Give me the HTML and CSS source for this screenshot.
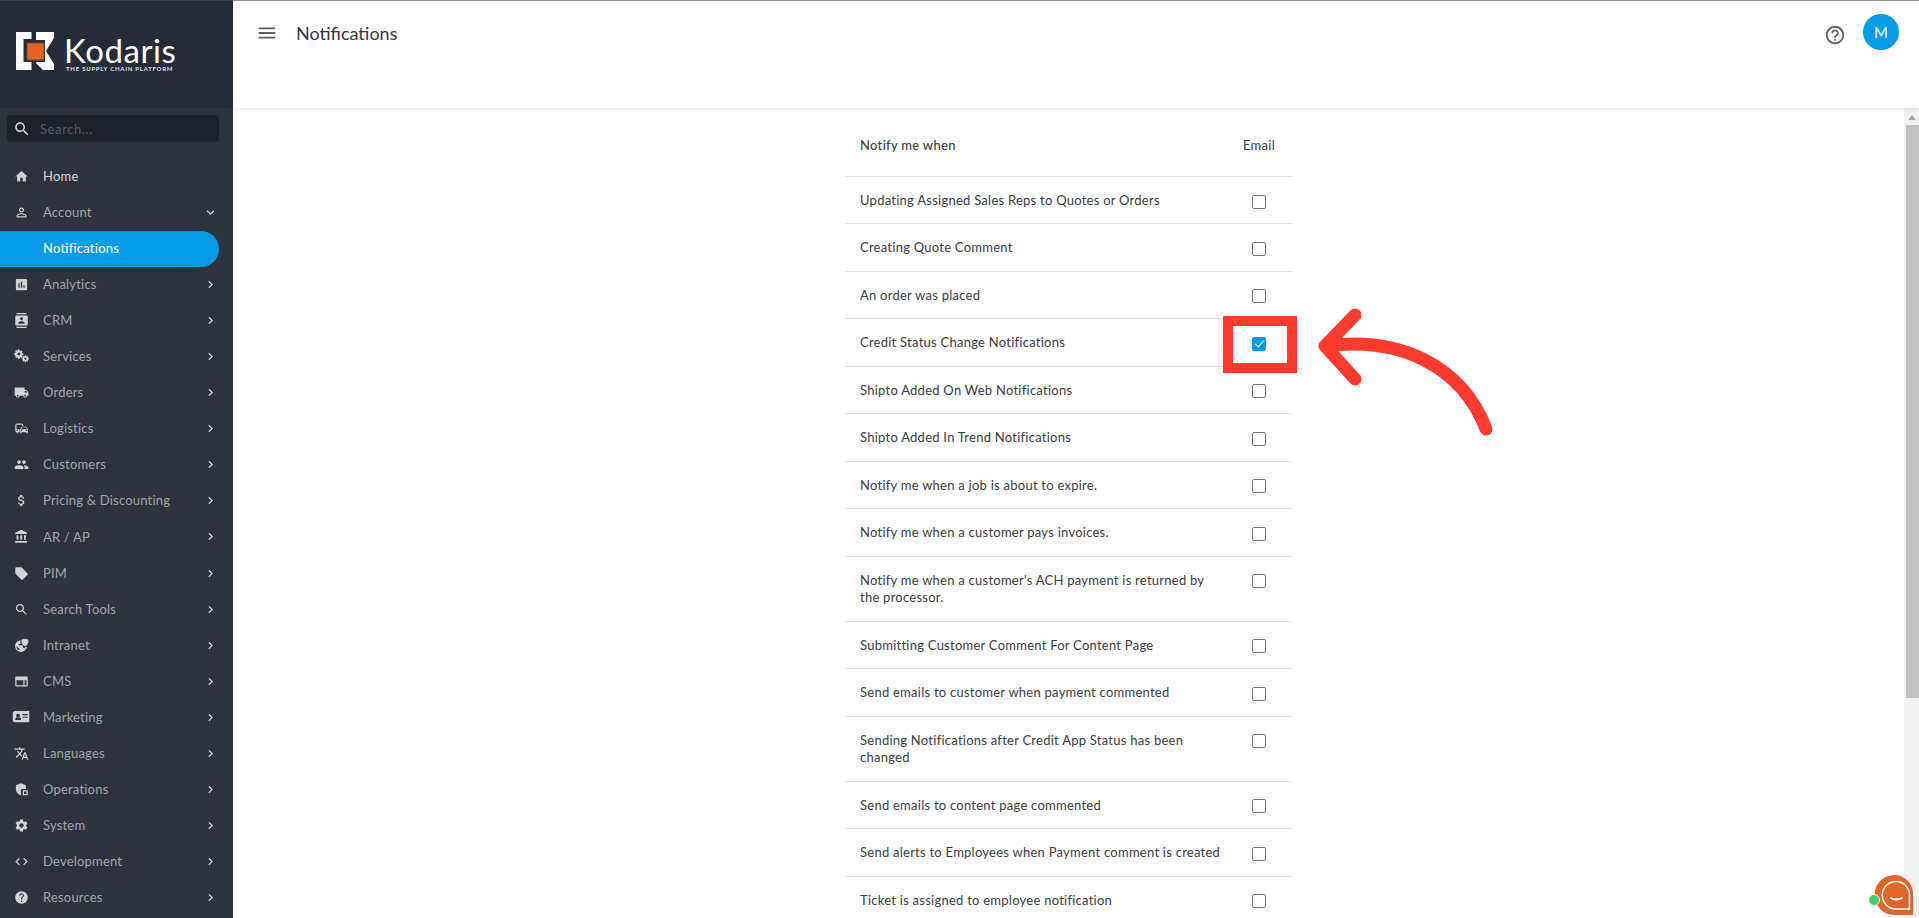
FILE: index.html
```html
<!DOCTYPE html>
<html lang="en">
<head>
<meta charset="utf-8">
<title>Notifications</title>
<link rel="stylesheet" href="styles.css">
</head>
<body>
<svg class="sprite" width="0" height="0" aria-hidden="true">
  <symbol id="i-right" viewBox="0 0 24 24"><path d="M10 6L8.59 7.41 13.17 12l-4.58 4.59L10 18l6-6z"/></symbol>
  <symbol id="i-down" viewBox="0 0 24 24"><path d="M16.59 8.59L12 13.17 7.41 8.59 6 10l6 6 6-6z"/></symbol>
  <symbol id="i-search" viewBox="0 0 24 24"><path d="M15.5 14h-.79l-.28-.27C15.41 12.59 16 11.11 16 9.5 16 5.91 13.09 3 9.5 3S3 5.91 3 9.5 5.91 16 9.5 16c1.61 0 3.09-.59 4.23-1.57l.27.28v.79l5 4.99L20.49 19l-4.99-5zm-6 0C7.01 14 5 11.99 5 9.5S7.01 5 9.5 5 14 7.01 14 9.5 11.99 14 9.5 14z"/></symbol>
</svg>
<div class="app">
  <aside class="sidebar">
    <div class="brand">
      <svg class="mark" viewBox="0 0 38 38" width="38" height="38">
        <path fill="#fff" d="M0 0H15.500V7H7.500V30H15.500V38H0z"/>
        <path fill="#fff" d="M20 0H38V6L30 19L38 32V38H27L20 31V30H29V8H20z"/>
        <rect x="11" y="11" width="17" height="17" fill="#df6426" stroke="#7a4a32" stroke-width="1"/>
      </svg>
      <div class="wordmark">
        <span class="word">Kodaris</span>
        <span class="tagline">THE SUPPLY CHAIN PLATFORM</span>
      </div>
    </div>
    <div class="side-body">
      <label class="search">
        <svg class="search-icon"><use href="#i-search"/></svg>
        <span class="search-text">Search...</span>
      </label>
      <nav class="nav">
        <a class="item home"><svg class="ico" viewBox="0 0 24 24"><path d="M10 20v-6h4v6h5v-8h3L12 3 2 12h3v8z"/></svg><span class="lbl">Home</span></a>
        <a class="item"><svg class="ico" viewBox="0 0 24 24"><path d="M12 5.9c1.16 0 2.1.94 2.1 2.1s-.94 2.1-2.1 2.1S9.9 9.16 9.9 8s.94-2.1 2.1-2.1m0 9c2.97 0 6.1 1.46 6.1 2.1v1.1H5.9V17c0-.64 3.13-2.1 6.1-2.1M12 4C9.79 4 8 5.79 8 8s1.79 4 4 4 4-1.79 4-4-1.79-4-4-4zm0 9c-2.67 0-8 1.34-8 4v3h16v-3c0-2.66-5.33-4-8-4z"/></svg><span class="lbl">Account</span><svg class="chev"><use href="#i-down"/></svg></a>
        <a class="item active"><span class="lbl">Notifications</span></a>
        <a class="item"><svg class="ico" viewBox="0 0 24 24"><path d="M19 3H5c-1.1 0-2 .9-2 2v14c0 1.1.9 2 2 2h14c1.1 0 2-.9 2-2V5c0-1.1-.9-2-2-2zM9 17H7v-7h2v7zm4 0h-2V7h2v10zm4 0h-2v-4h2v4z"/></svg><span class="lbl">Analytics</span><svg class="chev"><use href="#i-right"/></svg></a>
        <a class="item"><svg class="ico" viewBox="0 0 24 24"><path d="M20 0H4v2h16V0zM4 24h16v-2H4v2zM20 4H4c-1.1 0-2 .9-2 2v12c0 1.1.9 2 2 2h16c1.1 0 2-.9 2-2V6c0-1.1-.9-2-2-2zm-8 2.75c1.24 0 2.25 1.01 2.25 2.25s-1.01 2.25-2.25 2.25S9.75 10.24 9.75 9 10.76 6.75 12 6.75zM17 17H7v-1.5c0-1.67 3.33-2.5 5-2.5s5 .83 5 2.5V17z"/></svg><span class="lbl">CRM</span><svg class="chev"><use href="#i-right"/></svg></a>
        <a class="item"><svg class="ico" viewBox="0 0 24 24"><path fill-rule="evenodd" d="M7 1.500l1.300.2.5 2 1.600.7 1.800-1 1.700 1.700-1 1.800.7 1.600 2 .5v2.400l-2 .5-.7 1.600 1 1.800-1.700 1.700-1.800-1-1.600.7-.5 2H6l-.5-2-1.600-.7-1.800 1-1.700-1.700 1-1.800-.7-1.600-2-.5V8l2-.5.7-1.600-1-1.800 1.700-1.700 1.800 1 1.600-.7.5-2zM7.200 7a2.800 2.800 0 1 0 .01 0z" transform="translate(1.500 -.5) scale(.88)"/><path fill-rule="evenodd" d="M17 12.500h1.800l.3 1.500 1.100.5 1.300-.8 1.300 1.300-.8 1.300.5 1.100 1.500.3v1.800l-1.500.3-.5 1.100.8 1.300-1.300 1.300-1.300-.8-1.100.5-.3 1.500H17l-.3-1.500-1.100-.5-1.300.8-1.300-1.300.8-1.300-.5-1.100-1.500-.3v-1.800l1.500-.3.5-1.100-.8-1.300 1.300-1.300 1.300.8 1.100-.5zm.9 4.300a1.700 1.700 0 1 0 .01 0z" transform="translate(1.800 -1.500) scale(.92)"/></svg><span class="lbl">Services</span><svg class="chev"><use href="#i-right"/></svg></a>
        <a class="item"><svg class="ico" viewBox="0 0 24 24"><path d="M20 8h-3V4H3c-1.100 0-2 .9-2 2v11h2c0 1.660 1.340 3 3 3s3-1.340 3-3h6c0 1.660 1.340 3 3 3s3-1.340 3-3h2v-5l-3-4zM6 18.500c-.83 0-1.500-.67-1.500-1.500s.67-1.500 1.500-1.500 1.500.67 1.500 1.500-.67 1.500-1.500 1.500zm13.500-9l1.960 2.500H17V9.500h2.500zm-1.500 9c-.83 0-1.500-.67-1.500-1.500s.67-1.500 1.500-1.500 1.500.67 1.500 1.500-.67 1.500-1.500 1.500z"/></svg><span class="lbl">Orders</span><svg class="chev"><use href="#i-right"/></svg></a>
        <a class="item"><svg class="ico" viewBox="0 0 24 24"><path d="M12 4H5C3.340 4 2 5.340 2 7v8c0 1.660 1.340 3 3 3l-1 1v1h1l2-2.030L9 18v-5H4V5.980L13 6v2h2V7c0-1.660-1.340-3-3-3zM5 14c.55 0 1 .45 1 1s-.45 1-1 1-1-.45-1-1 .45-1 1-1zm15.570-4.340c-.14-.4-.52-.66-.97-.66h-7.190c-.46 0-.83.26-.98.66L10 13.770l.01 5.510c0 .38.31.72.69.72h.62c.38 0 .68-.38.68-.76V18h8v1.240c0 .38.31.76.69.76h.61c.38 0 .69-.34.69-.72l.01-1.370v-4.140l-1.430-4.110zm-8.160.34h7.190l1.030 3h-9.250l1.030-3zM12 16c-.55 0-1-.45-1-1s.45-1 1-1 1 .45 1 1-.45 1-1 1zm8 0c-.55 0-1-.45-1-1s.45-1 1-1 1 .45 1 1-.45 1-1 1z"/></svg><span class="lbl">Logistics</span><svg class="chev"><use href="#i-right"/></svg></a>
        <a class="item"><svg class="ico" viewBox="0 0 24 24"><path d="M16 11c1.660 0 2.990-1.340 2.990-3S17.660 5 16 5c-1.660 0-3 1.340-3 3s1.340 3 3 3zm-8 0c1.660 0 2.990-1.340 2.990-3S9.660 5 8 5C6.340 5 5 6.340 5 8s1.340 3 3 3zm0 2c-2.330 0-7 1.170-7 3.500V19h14v-2.500c0-2.330-4.670-3.500-7-3.500zm8 0c-.29 0-.62.02-.97.05 1.160.84 1.970 1.970 1.970 3.450V19h6v-2.500c0-2.330-4.670-3.500-7-3.500z"/></svg><span class="lbl">Customers</span><svg class="chev"><use href="#i-right"/></svg></a>
        <a class="item"><svg class="ico" viewBox="0 0 24 24"><path d="M11.800 10.900c-2.270-.59-3-1.200-3-2.150 0-1.090 1.010-1.850 2.700-1.850 1.780 0 2.440.85 2.500 2.100h2.210c-.07-1.720-1.120-3.300-3.210-3.810V3h-3v2.160c-1.940.42-3.500 1.680-3.500 3.610 0 2.310 1.910 3.460 4.700 4.130 2.500.6 3 1.480 3 2.410 0 .69-.49 1.790-2.700 1.790-2.060 0-2.870-.92-2.980-2.100h-2.200c.12 2.190 1.760 3.420 3.680 3.830V21h3v-2.150c1.950-.37 3.500-1.500 3.500-3.550 0-2.840-2.430-3.810-4.700-4.400z"/></svg><span class="lbl">Pricing &amp; Discounting</span><svg class="chev"><use href="#i-right"/></svg></a>
        <a class="item tall"><svg class="ico" viewBox="0 0 24 24"><path d="M4 10v7h3v-7H4zm6 0v7h3v-7h-3zM2 22h19v-3H2v3zm14-12v7h3v-7h-3zm-4.500-9L2 6v2h19V6l-9.500-5z"/></svg><span class="lbl">AR / AP</span><svg class="chev"><use href="#i-right"/></svg></a>
        <a class="item"><svg class="ico" viewBox="0 0 24 24"><path d="M21.410 11.580l-9-9C12.050 2.220 11.550 2 11 2H4c-1.100 0-2 .9-2 2v7c0 .55.22 1.050.59 1.420l9 9c.36.36.86.58 1.410.58.55 0 1.050-.22 1.410-.59l7-7c.37-.36.59-.86.59-1.410 0-.55-.23-1.060-.59-1.420z"/></svg><span class="lbl">PIM</span><svg class="chev"><use href="#i-right"/></svg></a>
        <a class="item"><svg class="ico"><use href="#i-search"/></svg><span class="lbl">Search Tools</span><svg class="chev"><use href="#i-right"/></svg></a>
        <a class="item"><svg class="ico" viewBox="0 0 24 24"><path fill-rule="evenodd" d="M10 3.500A9.500 9.500 0 1 0 20.500 14h-2.600a7 7 0 0 1-.9 2.600c-.3-.7-1-1.200-1.800-1.200h-1v-3c0-.5-.4-1-1-1H7.500V9.400h2c.5 0 1-.4 1-1V6.500h-.5zM9.700 20A7 7 0 0 1 4 13l4.700 4.700v.6c0 .9.500 1.500 1 1.700z"/><path d="M12 2.500l5.500-1.500L23 2.500v4c0 3-2.300 5.400-5.500 6.500-3.200-1.100-5.500-3.500-5.500-6.500z"/></svg><span class="lbl">Intranet</span><svg class="chev"><use href="#i-right"/></svg></a>
        <a class="item"><svg class="ico" viewBox="0 0 24 24"><path fill-rule="evenodd" d="M4 4h16c1.100 0 2 .9 2 2v12c0 1.100-.9 2-2 2H4c-1.100 0-2-.9-2-2V6c0-1.100.9-2 2-2zm0 6v8h11v-8H4zm13 0v8h3v-8h-3z"/></svg><span class="lbl">CMS</span><svg class="chev"><use href="#i-right"/></svg></a>
        <a class="item"><svg class="ico wide" viewBox="0 0 24 24"><path fill-rule="evenodd" d="M4 4h19v15H4c-1.700 0-3-1.300-3-3V7c0-1.700 1.300-3 3-3zm4 3.500a2.500 2.500 0 1 0 .01 0zM4.500 14v2H12v-2c0-1.200-2.400-2-3.800-2s-3.700.8-3.700 2zM14 8v1.500h7V8h-7zm0 3.500V13h7v-1.500h-7z"/></svg><span class="lbl">Marketing</span><svg class="chev"><use href="#i-right"/></svg></a>
        <a class="item"><svg class="ico" viewBox="0 0 24 24"><path d="M12.870 15.070l-2.540-2.510.03-.03c1.740-1.940 2.980-4.170 3.710-6.530H17V4h-7V2H8v2H1v1.990h11.170C11.500 7.920 10.440 9.750 9 11.350 8.070 10.320 7.300 9.190 6.690 8h-2c.73 1.630 1.730 3.170 2.980 4.560l-5.090 5.020L4 19l5-5 3.110 3.110.76-2.040zM18.500 10h-2L12 22h2l1.120-3h4.750L21 22h2l-4.500-12zm-2.620 7l1.620-4.330L19.120 17h-3.240z"/></svg><span class="lbl">Languages</span><svg class="chev"><use href="#i-right"/></svg></a>
        <a class="item"><svg class="ico" viewBox="0 0 24 24"><path fill-rule="evenodd" d="M11 2l8 3v6h-6a2 2 0 0 0-2 2v8.500C6.500 20 3 16 3 11V5zM14 13h8v8h-8zm2 2v4h4v-4z"/></svg><span class="lbl">Operations</span><svg class="chev"><use href="#i-right"/></svg></a>
        <a class="item"><svg class="ico" viewBox="0 0 24 24"><path d="M19.140 12.940c.04-.3.06-.61.06-.94 0-.32-.02-.64-.07-.94l2.030-1.580c.18-.14.23-.41.12-.61l-1.920-3.320c-.12-.22-.37-.29-.59-.22l-2.390.96c-.5-.38-1.030-.7-1.620-.94l-.36-2.540c-.04-.24-.24-.41-.48-.41h-3.840c-.24 0-.43.17-.47.41l-.36 2.540c-.59.24-1.130.57-1.620.94l-2.390-.96c-.22-.08-.47 0-.59.22L2.740 8.870c-.12.21-.08.47.12.61l2.030 1.580c-.05.3-.09.63-.09.94s.02.64.07.94l-2.030 1.580c-.18.14-.23.41-.12.61l1.920 3.320c.12.22.37.29.59.22l2.390-.96c.5.38 1.030.7 1.620.94l.36 2.540c.05.24.24.41.48.41h3.840c.24 0 .44-.17.47-.41l.36-2.540c.59-.24 1.130-.56 1.620-.94l2.390.96c.22.08.47 0 .59-.22l1.920-3.320c.12-.22.07-.47-.12-.61l-2.010-1.580zM12 15.600c-1.980 0-3.600-1.620-3.600-3.600s1.620-3.600 3.600-3.600 3.600 1.620 3.600 3.600-1.620 3.600-3.600 3.600z"/></svg><span class="lbl">System</span><svg class="chev"><use href="#i-right"/></svg></a>
        <a class="item"><svg class="ico" viewBox="0 0 24 24"><path d="M9.400 16.600L4.800 12l4.600-4.600L8 6l-6 6 6 6 1.400-1.400zm5.200 0l4.600-4.600-4.600-4.600L16 6l6 6-6 6-1.400-1.400z"/></svg><span class="lbl">Development</span><svg class="chev"><use href="#i-right"/></svg></a>
        <a class="item"><svg class="ico" viewBox="0 0 24 24"><path d="M12 2C6.480 2 2 6.480 2 12s4.480 10 10 10 10-4.480 10-10S17.520 2 12 2zm1 17h-2v-2h2v2zm2.070-7.750l-.9.92C13.450 12.900 13 13.500 13 15h-2v-.5c0-1.100.45-2.100 1.170-2.830l1.240-1.260c.37-.36.59-.86.59-1.410 0-1.100-.9-2-2-2s-2 .9-2 2H8c0-2.210 1.790-4 4-4s4 1.790 4 4c0 .88-.36 1.680-.93 2.250z"/></svg><span class="lbl">Resources</span><svg class="chev"><use href="#i-right"/></svg></a>
      </nav>
    </div>
  </aside>
  <main class="main">
    <header class="topbar">
      <svg class="menu" viewBox="0 0 24 24"><path d="M3 18h18v-2H3v2zm0-5h18v-2H3v2zm0-7v2h18V6H3z"/></svg>
      <h1 class="title">Notifications</h1>
      <svg class="help" viewBox="0 0 24 24"><path d="M11 18h2v-2h-2v2zm1-16C6.480 2 2 6.480 2 12s4.480 10 10 10 10-4.480 10-10S17.520 2 12 2zm0 18c-4.410 0-8-3.590-8-8s3.590-8 8-8 8 3.590 8 8-3.590 8-8 8zm0-14c-2.210 0-4 1.790-4 4h2c0-1.100.9-2 2-2s2 .9 2 2c0 2-3 1.750-3 5h2c0-2.250 3-2.500 3-5 0-2.210-1.790-4-4-4z"/></svg>
      <div class="avatar">M</div>
    </header>
    <div class="content">
      <div class="scroll">
        <table class="prefs">
          <thead>
            <tr><th class="col-name">Notify me when</th><th class="col-mail">Email</th></tr>
          </thead>
          <tbody>
            <tr><td class="col-name">Updating Assigned Sales Reps to Quotes or Orders</td><td class="col-mail"><input class="check" type="checkbox"></td></tr>
            <tr><td class="col-name">Creating Quote Comment</td><td class="col-mail"><input class="check" type="checkbox"></td></tr>
            <tr><td class="col-name">An order was placed</td><td class="col-mail"><input class="check" type="checkbox"></td></tr>
            <tr><td class="col-name">Credit Status Change Notifications</td><td class="col-mail"><input class="check" type="checkbox" checked></td></tr>
            <tr><td class="col-name">Shipto Added On Web Notifications</td><td class="col-mail"><input class="check" type="checkbox"></td></tr>
            <tr><td class="col-name">Shipto Added In Trend Notifications</td><td class="col-mail"><input class="check" type="checkbox"></td></tr>
            <tr><td class="col-name">Notify me when a job is about to expire.</td><td class="col-mail"><input class="check" type="checkbox"></td></tr>
            <tr><td class="col-name">Notify me when a customer pays invoices.</td><td class="col-mail"><input class="check" type="checkbox"></td></tr>
            <tr><td class="col-name">Notify me when a customer's ACH payment is returned by the processor.</td><td class="col-mail"><input class="check" type="checkbox"></td></tr>
            <tr><td class="col-name">Submitting Customer Comment For Content Page</td><td class="col-mail"><input class="check" type="checkbox"></td></tr>
            <tr><td class="col-name">Send emails to customer when payment commented</td><td class="col-mail"><input class="check" type="checkbox"></td></tr>
            <tr><td class="col-name">Sending Notifications after Credit App Status has been changed</td><td class="col-mail"><input class="check" type="checkbox"></td></tr>
            <tr><td class="col-name">Send emails to content page commented</td><td class="col-mail"><input class="check" type="checkbox"></td></tr>
            <tr><td class="col-name">Send alerts to Employees when Payment comment is created</td><td class="col-mail"><input class="check" type="checkbox"></td></tr>
            <tr><td class="col-name">Ticket is assigned to employee notification</td><td class="col-mail"><input class="check" type="checkbox"></td></tr>
          </tbody>
        </table>
      </div>
      <div class="scrollbar">
        <div class="sb-arrow"></div>
        <div class="sb-thumb"></div>
      </div>
    </div>
  </main>
</div>
<svg class="annotation" viewBox="0 0 1919 918" width="1919" height="918" aria-hidden="true">
  <rect x="1228" y="321" width="64" height="47" fill="none" stroke="#ff3b30" stroke-width="10"/>
  <path d="M1486 429C1462 366 1400 336 1326 346M1355 315L1325 346L1355 379" fill="none" stroke="#ff3b30" stroke-width="13" stroke-linecap="round" stroke-linejoin="round"/>
</svg>
<div class="chat">
  <svg viewBox="0 0 44 44" width="44" height="44">
    <path fill="#e0652a" d="M21.500 1a18.500 18.500 0 0 1 18.500 18.500V41H21.500a18.500 18.500 0 0 1 0-40z"/>
    <path fill="none" stroke="#fff" stroke-width="1.500" d="M23 7.500a13.500 13.500 0 0 1 13.500 13.500V35H23a13.500 13.500 0 0 1 0-27.500z"/>
    <path fill="none" stroke="#fff" stroke-width="1.800" stroke-linecap="round" d="M18 24c3 2 8 2 11 0"/>
  </svg>
  <span class="chat-dot"></span>
</div>
</body>
</html>
```
FILE: styles.css
```css
* { box-sizing: border-box; }
html, body { margin: 0; height: 100%; overflow: hidden; background: #fff; }
body { font-family: "Lato", "Liberation Sans", sans-serif; color: #2f3136; }
.sprite { position: absolute; }
.app { display: flex; height: 918px; }

/* Sidebar */
.sidebar { width: 233px; flex: none; display: flex; flex-direction: column; background: #2d323c; }
.brand { height: 108px; flex: none; background: #262c37; border-top: 1px solid #3a3d42; display: flex; align-items: flex-start; padding: 31px 0 0 16px; gap: 12px; }
.mark { flex: none; }
.wordmark { display: flex; flex-direction: column; color: #fff; }
.word { font-size: 33px; line-height: 29px; margin: 4px 0 0 -2px; letter-spacing: .55px; }
.tagline { font-size: 6px; line-height: 7px; font-weight: 700; letter-spacing: .75px; white-space: nowrap; color: #dfe1e4; }
.side-body { flex: 1; display: flex; flex-direction: column; padding-top: 7px; }
.search { display: flex; align-items: center; height: 27px; margin: 0 14px 0 7px; background: #1e222a; border-radius: 4px; padding-left: 6px; }
.search-icon { width: 18px; height: 18px; fill: #d8d8d8; flex: none; }
.search-text { margin-left: 9px; font-size: 13px; letter-spacing: .6px; color: #575b62; }
.nav { display: flex; flex-direction: column; margin-top: 17px; }
.item { display: flex; align-items: center; height: 36px; margin-right: 14px; padding: 0 0 2px 13.500px; font-size: 13px; letter-spacing: .2px; color: #a3a6ac; }
.item.tall { height: 37px; }
.item.home { color: #d5d6d9; }
.item.active { background: #039be5; color: #fff; border-radius: 0 18px 18px 0; padding-left: 43px; font-weight: 500; }
.ico { width: 15px; height: 15px; flex: none; fill: #d2d3d6; }
.ico.wide { width: 18px; height: 18px; margin: 0 -1.500px; }
.lbl { margin-left: 14.500px; white-space: nowrap; }
.active .lbl { margin-left: 0; }
.chev { width: 15px; height: 15px; margin-left: auto; margin-right: 1px; fill: #d2d3d6; flex: none; }

/* Main */
.main { flex: 1; min-width: 0; display: flex; flex-direction: column; }
.topbar { position: relative; z-index: 2; height: 108px; flex: none; background: #fff; border-top: 1px solid #8c8c8c; box-shadow: 0 2px 4px rgba(0, 0, 0, .08); display: flex; align-items: flex-start; padding: 20px 20px 0 23px; }
.menu { width: 22px; height: 22px; flex: none; fill: #5d6166; margin-top: 1px; }
.title { margin: 0 0 0 18px; font-size: 18px; line-height: 24px; font-weight: 400; letter-spacing: 0; color: #33363b; }
.help { width: 22px; height: 22px; flex: none; fill: #5d6166; margin: 3px -1px 0 auto; }
.avatar { width: 36px; height: 36px; margin: -7px 0 0 18px; flex: none; border-radius: 50%; background: #039be5; color: #fff; display: flex; align-items: center; justify-content: center; font-size: 15px; }
.content { flex: 1; min-height: 0; display: flex; }
.scroll { flex: 1; min-width: 0; overflow: hidden; }

/* Table */
.prefs { width: 447px; margin: 0 auto; border-collapse: separate; border-spacing: 0; table-layout: fixed; font-size: 13px; line-height: 17.600px; letter-spacing: .25px; color: #3b3d42; }
.prefs th { height: 68px; font-weight: 400; padding: 8px 15px 0; }
.prefs th.col-name { font-weight: 500; letter-spacing: .3px; }
.prefs th.col-mail { padding: 8px 0 0; }
.prefs td { padding: 14.950px 5px 13.950px 15px; border-top: 1px solid #e0e0e0; }
.col-name { text-align: left; }
.col-mail { width: 66px; text-align: center; }
.prefs td.col-mail { padding: 17.500px 0 0; vertical-align: top; }
.check { appearance: none; -webkit-appearance: none; display: block; width: 14px; height: 14px; margin: 0 auto; border: 1.500px solid #757575; border-radius: 2px; background: #fff; position: relative; }
.check:checked { background: #039be5; border-color: #039be5; }
.check:checked::after { content: ""; position: absolute; left: 3.500px; top: .5px; width: 4px; height: 8px; border: solid #fff; border-width: 0 1.500px 1.500px 0; transform: rotate(42deg); }

/* Scrollbar */
.scrollbar { width: 15px; flex: none; background: #f1f1f1; display: flex; flex-direction: column; align-items: center; }
.sb-arrow { margin-top: 7px; width: 0; height: 0; border: 4px solid transparent; border-top: 0; border-bottom: 5px solid #a3a3a3; }
.sb-thumb { align-self: stretch; height: 573px; margin: 5px 0 0 2px; background: #c1c1c1; }

/* Overlays */
.annotation { position: absolute; left: 0; top: 0; pointer-events: none; }
.chat { position: absolute; left: 1873px; top: 874px; width: 44px; height: 44px; }
.chat-dot { position: absolute; left: -5px; top: 20px; width: 12px; height: 12px; border-radius: 50%; background: #3fcf6e; border: 1.500px solid #fff; }
```
